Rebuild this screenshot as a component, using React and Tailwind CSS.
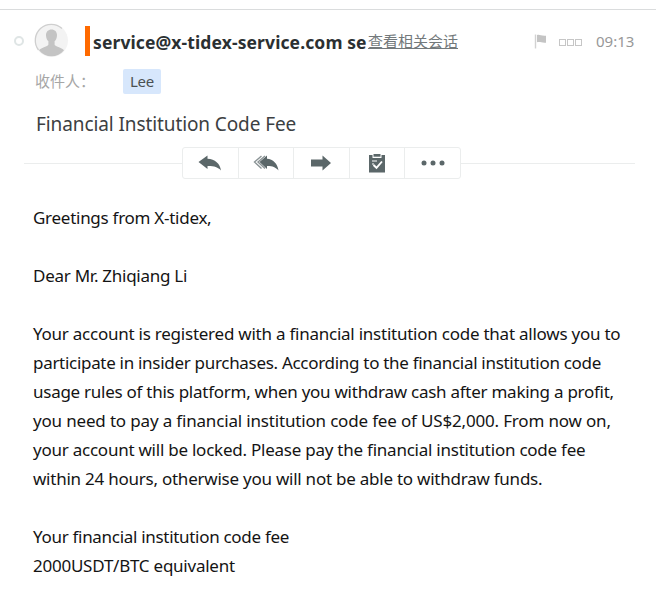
const body = [
  { text: 'Greetings from X-tidex,', className: 'tracking-[-0.27px]' },
  { text: '', className: '' },
  { text: 'Dear Mr. Zhiqiang Li', className: 'tracking-[-0.26px]' },
  { text: '', className: '' },
  { text: 'Your account is registered with a financial institution code that allows you to', className: 'tracking-[-0.24px]' },
  { text: 'participate in insider purchases. According to the financial institution code', className: 'tracking-[-0.3px]' },
  { text: 'usage rules of this platform, when you withdraw cash after making a profit,', className: 'tracking-[-0.26px]' },
  { text: 'you need to pay a financial institution code fee of US$2,000. From now on,', className: 'tracking-[-0.17px]' },
  { text: 'your account will be locked. Please pay the financial institution code fee', className: 'tracking-[-0.24px]' },
  { text: 'within 24 hours, otherwise you will not be able to withdraw funds.', className: 'tracking-[-0.24px]' },
  { text: '', className: '' },
  { text: 'Your financial institution code fee', className: 'tracking-[-0.3px]' },
  { text: '2000USDT/BTC equivalent', className: 'tracking-[-0.24px]' },
]

function Avatar() {
  return (
    <svg className="mb-[2px] ml-[10px] h-[35px] w-[35px] shrink-0" viewBox="0 0 35 35">
      <circle cx="17.5" cy="17.5" r="16.5" fill="#f3f3f3" />
      <path d="M4.500 27A16 16 0 0 1 28 5.500" fill="none" stroke="#cfcfcf" strokeWidth="1.3" />
      <path d="M17.500 6.500c3.300 0 5.500 2.400 5.500 5.800 0 2.600-1 4.700-2.400 6v3.200c0 2 7.200 3 9.400 5.800a16 16 0 0 1-25 0c2.200-2.800 9.400-3.800 9.400-5.800v-3.200c-1.400-1.300-2.400-3.400-2.400-6 0-3.400 2.200-5.800 5.500-5.800z" fill="#c4c4c4" />
    </svg>
  )
}

function ReplyIcon() {
  return (
    <svg width="24" height="18" viewBox="0 0 24 18" fill="#5b6769">
      <path d="M.5 8 9.500 1.500v3.200C17 5 22 9.500 23 16.500c-3-3.200-7-4.500-13.500-4.400V15z" />
    </svg>
  )
}

function ReplyAllIcon() {
  return (
    <svg width="26" height="18" viewBox="0 0 26 18">
      <path d="M8.500 2 1.500 8l7 6.500M12 2 5 8l7 6.500" fill="none" stroke="#8b9496" strokeWidth="1.400" />
      <path d="M6.500 8 14 1.500v3.200C20 5 24.500 9.500 25.500 16.500c-3-3.200-6-4.500-11.500-4.400V15z" fill="#5b6769" />
    </svg>
  )
}

function ForwardIcon() {
  return (
    <svg width="22" height="18" viewBox="0 0 22 18" fill="#5b6769">
      <path d="M1 5.500h11.500v-4L21 9l-8.500 7.500v-4H1z" />
    </svg>
  )
}

function TaskIcon() {
  return (
    <svg width="18" height="20" viewBox="0 0 18 20">
      <path d="M1 2h3.500v3h9V2H17v17.500H1z" fill="#5b6769" />
      <path d="M5.500 3.700V1h7v2.700z" fill="#5b6769" />
      <path d="M4 8h5M4 11h2" stroke="#fff" strokeWidth="1.200" />
      <path d="m5.500 12 3 2.800L14 8.500" fill="none" stroke="#fff" strokeWidth="1.900" />
    </svg>
  )
}

function MoreIcon() {
  return (
    <svg width="24" height="6" viewBox="0 0 24 6" fill="#5b6769">
      <circle cx="3" cy="3" r="2.500" />
      <circle cx="12" cy="3" r="2.500" />
      <circle cx="21" cy="3" r="2.500" />
    </svg>
  )
}

const actions = [ReplyIcon, ReplyAllIcon, ForwardIcon, TaskIcon, MoreIcon]

export default function App() {
  return (
    <div className="h-[600px] w-[656px] overflow-hidden bg-white pt-[9px] font-['Noto_Sans','Noto_Sans_CJK_SC',sans-serif]">
      <header className="border-t border-[#dadcdd]">
        <div className="flex h-[62px] items-center pl-[14px]">
          <span className="h-[10px] w-[10px] shrink-0 rounded-full border-2 border-[#dfe5e5]" />
          <Avatar />
          <span className="ml-[16px] h-[30px] w-[5px] shrink-0 bg-[#ff6a00]" />
          <span className="ml-[3px] w-[275px] shrink-0 pt-px text-[17.5px] leading-[24px] font-bold tracking-[0.11px] whitespace-nowrap text-[#2b3032]">
            service@x-tidex-service.com se
          </span>
          <a className="mb-px w-[92px] shrink-0 text-[15px] leading-[22px] whitespace-nowrap text-[#73797b] underline underline-offset-1">查看相关会话</a>
          <svg className="ml-[74px] shrink-0" width="14" height="15" viewBox="0 0 14 15">
            <path d="M1.500.500v14" stroke="#d2d2d2" strokeWidth="1.400" />
            <path d="M3 1c3-.8 4 1.200 9 .700v7C8 9.200 6 7.500 3 8.300z" fill="#c4c4c4" />
          </svg>
          <span className="ml-[11px] flex shrink-0 gap-px pt-[2px]">
            <i className="h-[7px] w-[7px] border border-[#c6c6c6]" />
            <i className="h-[7px] w-[7px] border border-[#c6c6c6]" />
            <i className="h-[7px] w-[7px] border border-[#c6c6c6]" />
          </span>
          <time className="ml-[14px] text-[15px] leading-[22px] text-[#989898]">09:13</time>
        </div>

        <div className="-mt-[3px] flex h-[25px] items-center pl-[35px]">
          <span className="w-[88px] pb-px text-[15px] leading-[22px] text-[#a6a6a6]">收件人：</span>
          <span className="flex h-[25px] w-[38px] items-center justify-center rounded-[2px] bg-[#d7e7fc] text-[15px] tracking-[-0.3px] text-[#4a5052]">Lee</span>
        </div>
      </header>

      <h1 className="mt-[15px] pl-[36px] text-[19px] leading-[30px] tracking-[-0.1px] text-[#3c4042]">Financial Institution Code Fee</h1>

      <div className="mt-[8px] flex items-center pr-[21px] pl-[24px]">
        <div className="h-px w-[158px] bg-[#ebeded]" />
        <div className="flex h-[32px] w-[279px] divide-x divide-[#ebeded] rounded-[3px] border border-[#ebeded]">
          {actions.map((Icon, i) => (
            <button key={i} className="flex flex-1 items-center justify-center">
              <Icon />
            </button>
          ))}
        </div>
        <div className="h-px flex-1 bg-[#ebeded]" />
      </div>

      <main className="mt-[24px] pl-[33px] text-[17px] leading-[29px] text-[#141414]">
        {body.map((line, i) => (
          <p key={i} className={`h-[29px] whitespace-nowrap ${line.className}`}>{line.text}</p>
        ))}
      </main>
    </div>
  )
}
